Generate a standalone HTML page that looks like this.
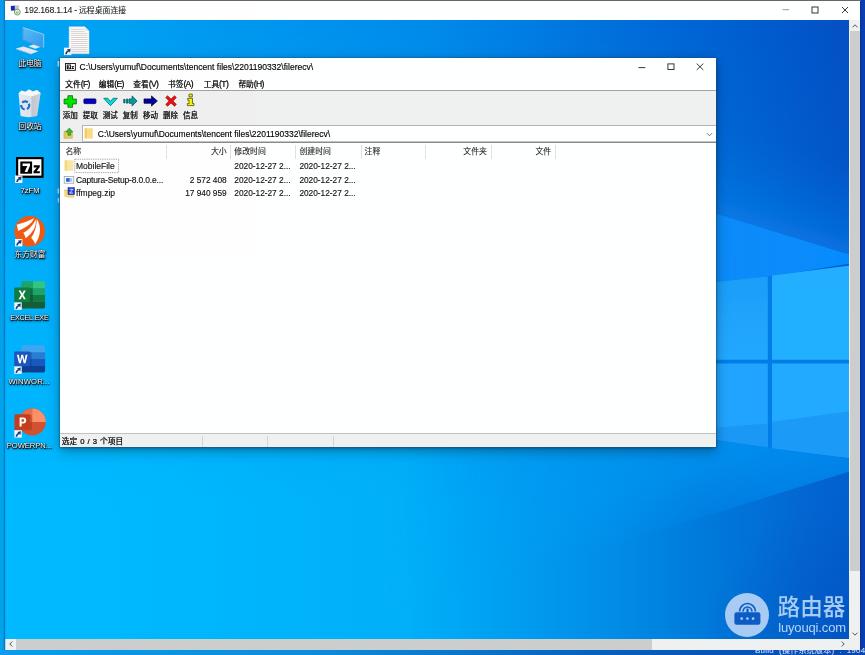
<!DOCTYPE html>
<html lang="zh-CN">
<head>
<meta charset="utf-8">
<title>192.168.1.14 - 远程桌面连接</title>
<style>
*{box-sizing:border-box;margin:0;padding:0}
html,body{width:865px;height:655px;overflow:hidden}
body{position:relative;will-change:opacity;opacity:.999;background:#0b93e3;font-family:"Liberation Sans","Noto Sans CJK SC",sans-serif;font-size:8.6px;color:#000}
.abs,.abs>*{position:absolute}
.tx{white-space:nowrap;line-height:12px;height:12px}
#win{-webkit-text-stroke:.14px currentColor}
#win .mi,#toolbar .lb,#status .tx{-webkit-text-stroke:.22px currentColor}
#list .h{-webkit-text-stroke:.1px currentColor}
svg{display:block;overflow:visible}
/* host desktop strips */
#host-left{left:0;top:0;width:5px;height:655px;background:linear-gradient(90deg,rgba(4,124,200,0) 0,rgba(4,124,200,0) 58%,rgba(4,124,200,.55) 78%,rgba(4,124,200,1) 90%,rgba(4,124,200,1) 100%),linear-gradient(180deg,#0a9cee 0,#049ee8 25%,#00a6ea 78%,#02a2e8 100%)}
#host-left2{left:5px;top:20px;width:1.2px;height:630px;background:linear-gradient(90deg,rgba(6,128,204,.5),rgba(6,128,204,0))}
#host-right{left:860px;top:0;width:5px;height:655px;background:linear-gradient(90deg,#0a2f8c 0,#0a3cab 30%,#0a40b2 100%)}
#host-bottom{left:0;top:650px;width:865px;height:5px;background:linear-gradient(90deg,#0c9cee 0%,#0a8ee0 35%,#0878d0 52%,#0560c0 70%,#0a46b6 100%)}
#host-bottom .tx{left:755px;top:-5.5px;font-size:8px;color:#dfe9f8;letter-spacing:.25px}
/* rdp window */
#rdp-top{left:4px;top:0;width:857px;height:1px;background:#62676e}
#rdp-title{left:5px;top:1px;width:855px;height:19px;background:#fff}
#rdp-title .tx{left:19.3px;top:3px;font-size:8.8px;color:#1c1c1c;-webkit-text-stroke:.08px currentColor}
#desk{left:5px;top:20px;width:844px;height:619px;overflow:hidden;background:#0a8ee6}
#wall{left:0;top:0}
#vscroll{left:849px;top:20px;width:11px;height:619px;background:#f0f0f0}
#vscroll .thumb{left:1px;top:11px;width:10px;height:539.5px;background:#cdcdcd}
#hscroll{left:5px;top:638.6px;width:844px;height:11.2px;background:#f0f0f0}
#hscroll .thumb{left:11px;top:0;width:636px;height:11.2px;background:#cdcdcd}
#corner{left:849px;top:638.6px;width:11px;height:11.2px;background:#f0f0f0}
.lab{width:70px;text-align:center;color:#fff;font-size:7.7px;line-height:10px;height:10px;white-space:nowrap;text-shadow:0 0 1px #000,.5px .8px 1px #000,.5px 1px 1.5px rgba(0,0,0,.9),0 1px 2.5px rgba(0,0,0,.7)}
/* 7-zip window */
#win{left:55.3px;top:37.9px;width:655.3px;height:389.5px;background:#fff;box-shadow:0 0 0 .6px rgba(40,80,130,.6),0 1px 3px rgba(0,0,0,.35),0 4px 12px rgba(0,0,0,.32)}
#win .title{left:19.3px;top:2.7px;font-size:8.55px}
#win .mi{top:20.5px;font-size:7.7px}
#win .mi i{font-style:normal;font-size:8.6px;letter-spacing:-.62px}
#toolbar{left:0;top:32.2px;width:655.3px;height:35.4px;background:#f0f0f0;border-top:.9px solid #a3a3a3}
#toolbar .lb{top:20.4px;font-size:7.5px;line-height:10px;height:10px;white-space:nowrap;color:#000}
#addr{left:0;top:67.4px;width:655.3px;height:17px;background:#f0f0f0}
#addr .combo{left:21.7px;top:-.5px;width:633.6px;height:17px;background:#fff;border:.8px solid #b4b4b4;border-right:none;border-bottom-color:#c4c4c4}
#addr .tx{left:37.5px;top:2.4px;font-size:8.5px}
#list{left:0;top:84.1px;width:655.3px;height:291.2px;background:#fff;border-top:.9px solid #868b94}
#list .h{top:4px;font-size:7.9px;line-height:10px;height:10px;white-space:nowrap;color:#262626}
#list .sep{top:2px;width:.9px;height:14.5px;background:#e0e0e0}
#list .c{font-size:8.5px;line-height:11px;height:11px;white-space:nowrap;color:#111}
#list .n{font-size:8.3px;line-height:11px;height:11px;white-space:nowrap;color:#111}
#status{left:0;top:375.3px;width:655.3px;height:14.2px;background:#f0f0f0;border-top:.9px solid #c2c2c2}
#status .tx{left:1.4px;top:1.7px;font-size:7.7px;line-height:11px;height:11px;word-spacing:.95px}
#status .sep{top:1.5px;width:.9px;height:11.5px;background:#d4d4d4}
</style>
</head>
<body class="abs">
<div id="host-left"></div>
<div id="host-left2" style="z-index:5"></div>
<div id="host-right"></div>
<div id="host-bottom" class="abs"><div class="tx">Build&nbsp; (操作系统版本)&nbsp; :&nbsp; 1904</div></div>
<div id="rdp-top"></div>
<div id="rdp-title" class="abs">
  <svg style="left:5.3px;top:3.6px" width="11" height="11" viewBox="0 0 11 11">
    <rect x="2.7" y=".3" width="6.2" height="4.7" fill="#c4c8ce"/>
    <rect x=".9" y=".9" width="3.9" height="4.7" fill="#1428b4"/>
    <circle cx="7.3" cy="7.1" r="2.9" fill="#f2f5ee" stroke="#5c9a4a" stroke-width=".9"/>
    <path d="M6 7.9 L7.4 6 M6.3 8.3 L8.7 7.6" stroke="#4a8a3a" stroke-width=".7" fill="none"/>
  </svg>
  <div class="tx"><span style="letter-spacing:-.3px">192.168.1.14 - </span><span style="font-size:7.87px">远程桌面连接</span></div>
  <svg style="left:777px;top:8.3px" width="8" height="2" viewBox="0 0 8 2"><rect x=".5" y=".3" width="6.6" height=".9" fill="#8a8a8a"/></svg>
  <svg style="left:806px;top:4.5px" width="8" height="8" viewBox="0 0 8 8"><rect x="1" y="1" width="6" height="6" fill="none" stroke="#222" stroke-width=".9"/></svg>
  <svg style="left:836px;top:4.5px" width="8" height="8" viewBox="0 0 8 8"><path d="M1 1 L7 7 M7 1 L1 7" stroke="#222" stroke-width=".9" fill="none"/></svg>
</div>
<div id="desk" class="abs">
  <svg id="wall" viewBox="5 20 844 619" width="844" height="619" preserveAspectRatio="none">
      <defs>
        <linearGradient id="gt" gradientUnits="userSpaceOnUse" x1="5" y1="0" x2="849" y2="0">
          <stop offset="0" stop-color="#00a4f4"/><stop offset="0.124" stop-color="#00a2f4"/><stop offset="0.51" stop-color="#008aea"/><stop offset="0.77" stop-color="#006ad8"/><stop offset="0.918" stop-color="#025acc"/><stop offset="1" stop-color="#0550c4"/>
        </linearGradient>
        <linearGradient id="gb" gradientUnits="userSpaceOnUse" x1="5" y1="0" x2="849" y2="0">
          <stop offset="0" stop-color="#00b9ff"/><stop offset="0.112" stop-color="#00b9ff"/><stop offset="0.474" stop-color="#00b0f9"/><stop offset="0.71" stop-color="#028ee8"/><stop offset="0.817" stop-color="#007cdc"/><stop offset="0.948" stop-color="#0467d2"/><stop offset="1" stop-color="#0261cf"/>
        </linearGradient>
        <linearGradient id="gm" gradientUnits="userSpaceOnUse" x1="0" y1="30" x2="0" y2="625">
          <stop offset="0" stop-color="#000"/><stop offset="0.513" stop-color="#ababab"/><stop offset="0.8" stop-color="#fff"/><stop offset="1" stop-color="#fff"/>
        </linearGradient>
        <mask id="mk" maskUnits="userSpaceOnUse" x="5" y="20" width="844" height="619"><rect x="5" y="20" width="844" height="619" fill="url(#gm)"/></mask>
        <linearGradient id="bu" gradientUnits="userSpaceOnUse" x1="560" y1="0" x2="860" y2="0">
          <stop offset="0" stop-color="#0a90ff" stop-opacity="0"/><stop offset="0.5" stop-color="#0a90ff" stop-opacity="0.85"/><stop offset="1" stop-color="#068cff" stop-opacity="1"/>
        </linearGradient>
        <linearGradient id="bl" gradientUnits="userSpaceOnUse" x1="380" y1="0" x2="860" y2="0">
          <stop offset="0" stop-color="#0098f8" stop-opacity="0"/><stop offset="0.458" stop-color="#0098f8" stop-opacity="0.05"/><stop offset="0.667" stop-color="#0098f8" stop-opacity="0.14"/><stop offset="0.844" stop-color="#0098f8" stop-opacity="0.5"/><stop offset="1" stop-color="#0098f8" stop-opacity="0.62"/>
        </linearGradient>
        <linearGradient id="bg2" gradientUnits="userSpaceOnUse" x1="700" y1="518" x2="673.4" y2="432">
          <stop offset="0" stop-color="#00a0f8" stop-opacity="0"/><stop offset="0.55" stop-color="#00a0f8" stop-opacity="0.45"/><stop offset="1" stop-color="#00a0f8" stop-opacity="0.6"/>
        </linearGradient>
        <linearGradient id="bm2" gradientUnits="userSpaceOnUse" x1="380" y1="0" x2="860" y2="0">
          <stop offset="0" stop-color="#000"/><stop offset="0.375" stop-color="#999"/><stop offset="0.667" stop-color="#fff"/><stop offset="1" stop-color="#fff"/>
        </linearGradient>
        <mask id="mk2" maskUnits="userSpaceOnUse" x="5" y="20" width="844" height="619"><rect x="5" y="20" width="844" height="619" fill="url(#bm2)"/></mask>
        <linearGradient id="gl" gradientUnits="userSpaceOnUse" x1="783" y1="234" x2="809.4" y2="148">
          <stop offset="0" stop-color="#1088f4" stop-opacity="0.5"/><stop offset="0.5" stop-color="#0c7cea" stop-opacity="0.25"/><stop offset="1" stop-color="#0870e0" stop-opacity="0"/>
        </linearGradient>
        <linearGradient id="p1" gradientUnits="userSpaceOnUse" x1="0" y1="276" x2="0" y2="360">
          <stop offset="0" stop-color="#1e9ef8"/><stop offset="1" stop-color="#22a8ff"/>
        </linearGradient>
        <linearGradient id="p2" gradientUnits="userSpaceOnUse" x1="0" y1="264" x2="0" y2="360">
          <stop offset="0" stop-color="#25aeff"/><stop offset="1" stop-color="#22b0ff"/>
        </linearGradient>
        <radialGradient id="dk" gradientUnits="userSpaceOnUse" cx="872" cy="662" r="175">
          <stop offset="0" stop-color="#043aa8" stop-opacity="0.4"/><stop offset="1" stop-color="#043aa8" stop-opacity="0"/>
        </radialGradient>
        <filter id="soft" x="-5%" y="-5%" width="110%" height="110%"><feGaussianBlur stdDeviation="0.7"/></filter>
      </defs>
      <rect x="5" y="20" width="844" height="619" fill="url(#gt)"/>
      <rect x="5" y="20" width="844" height="619" fill="url(#gb)" mask="url(#mk)"/>
      <rect x="680" y="470" width="169" height="169" fill="url(#dk)"/>
      <g filter="url(#soft)">
        <polygon points="882,264.4 860,257.7 560,165.6 560,60 882,60" fill="url(#gl)"/>
        <polygon points="882,264.4 860,257.7 560,165.6 560,310 700,288 860,262" fill="url(#bu)"/>
        <polygon points="882,461 860,460.7 700,430 380,356 380,617 860,468.3" fill="url(#bg2)" mask="url(#mk2)"/>
        <polygon points="882,461 860,460.7 700,430 380,356 380,617 860,468.3" fill="url(#bl)"/>
        <polygon points="690,284.8 767.8,276.5 772,275.6 860,264.3 860,459.3 772,447.9 767.8,447 690,435.8" fill="#047de7"/>
        <polygon points="690,284.8 767.8,276.5 767.8,359.8 690,359.8" fill="url(#p1)"/>
        <polygon points="772,275.6 860,264.3 860,359.8 772,359.8" fill="url(#p2)"/>
        <polygon points="690,363.5 767.8,363.5 767.8,447 690,435.8" fill="#22a4ff"/>
        <polygon points="772,363.5 860,363.5 860,459.3 772,447.9" fill="#22aaff"/>
        <polygon points="690,429.8 767.8,423.5 767.8,447 690,435.8" fill="#1c98f6"/>
        <polygon points="772,421.8 860,410 860,459.3 772,447.9" fill="#1c9af8"/>
      </g>
    </svg>
  <!-- desktop icons: coordinates inside #desk are page coords minus (5,20) -->
  <svg id="icons" style="left:0;top:0" width="844" height="619" viewBox="5 20 844 619">
    <defs>
      
      <linearGradient id="mon" x1="0" y1="0" x2="1" y2="1"><stop offset="0" stop-color="#5cbcf8"/><stop offset="1" stop-color="#2f9aec"/></linearGradient>
      <linearGradient id="bin" x1="0" y1="0" x2="1" y2="0"><stop offset="0" stop-color="#e9edf3"/><stop offset=".56" stop-color="#dde1e8"/><stop offset=".6" stop-color="#c2c7d0"/><stop offset="1" stop-color="#cfd3da"/></linearGradient>
    </defs>
    <!-- This PC -->
    <g>
      <polygon points="23.1,27.5 43.7,34.3 43.7,47.4 23.1,39.8" fill="url(#mon)" stroke="#b4dcf8" stroke-width=".7"/>
      <path d="M23.1 27.8 V39.8 L43.5 47.3" fill="none" stroke="#2478c4" stroke-width=".8" opacity=".8"/>
      <polygon points="28.3,46.2 33.5,44.6 40.4,46.9 35.2,48.8" fill="#dbe9f5"/>
      <polygon points="16,48.6 23.5,46.4 38.4,51.3 31.2,53.9" fill="#ebe6ee"/>
      <polygon points="16,48.6 31.2,53.9 31.2,54.6 16,49.3" fill="#c4ccd8"/>
    </g>
    <!-- text file shortcut -->
    <g>
      <path d="M69.1 26.7 H84.8 L89 30.9 V53.7 H69.1 Z" fill="#fdfdfd" stroke="#d4dbe2" stroke-width=".5"/>
      <path d="M84.8 26.7 V30.9 H89 Z" fill="#e3e6ea"/>
      <g stroke="#cfc4c0" stroke-width=".75">
        <path d="M71 29.3H84 M71 31.4H84.5 M71 33.4H87.6 M71 35.4H87.6 M71 37.5H87.6 M71 39.5H87.6 M71 41.5H87.6 M71 43.5H87.6 M71 45.6H87.6 M71 47.6H87.6 M71 49.6H87.6 M71 51.6H87.6"/>
      </g>
      <g transform="translate(64 47.7)"><rect x="0" y="0" width="7.4" height="7.4" fill="#f4f6f8"/>
        <path d="M1.2 6.6 C1.4 4.6 2.5 3.3 3.8 2.8 L2.9 1.8 L6.6 1.1 L6 4.9 L5 3.9 C3.8 4.4 3 5.3 2.8 6.6 Z" fill="#1b3f80"/></g>
    </g>
    <!-- recycle bin -->
    <g>
      <path d="M18.6 94 L21.5 90.8 L25.5 92 L29 89.6 L33 91.6 L37 90.3 L40.6 93.6 L37.2 116 Q29 118.3 20.6 116 Z" fill="url(#bin)"/>
      <path d="M18.2 93.6 L21.5 90.6 L25.5 91.8 L29 89.4 L33 91.4 L37 90.1 L41 93.2 L31.2 96.4 Z" fill="#f6f8fa"/>
      <circle cx="25.2" cy="105.4" r="4" fill="none" stroke="#1a6fca" stroke-width="2.2" stroke-dasharray="6 2.38" transform="rotate(-25 25.2 105.4)"/>
    </g>
    <!-- 7zFM -->
    <g>
      <rect x="16" y="157" width="27.6" height="20.9" fill="#000"/>
      <rect x="18.2" y="159.2" width="23.2" height="16.4" fill="#fff"/>
      <rect x="20.3" y="161.5" width="11.8" height="12.2" fill="#000"/>
      <path d="M22.6 163.6 H30 V165.6 L27.4 171.9 H24.6 L27.3 165.9 H22.6 Z" fill="#fff"/>
      <path d="M33.7 165.3 H39.8 V167 L36.5 171.2 H39.8 V173.3 H33.5 V171.6 L36.8 167.4 H33.7 Z" fill="#000"/>
      <g transform="translate(15 175.5)"><rect x="0" y="0" width="7.4" height="7.4" fill="#f4f6f8"/>
        <path d="M1.2 6.6 C1.4 4.6 2.5 3.3 3.8 2.8 L2.9 1.8 L6.6 1.1 L6 4.9 L5 3.9 C3.8 4.4 3 5.3 2.8 6.6 Z" fill="#1b3f80"/></g>
    </g>
    <!-- eastmoney -->
    <g>
      <circle cx="29.7" cy="231.2" r="15.3" fill="#f05a12"/>
      <path d="M16.7 224.7 Q25.5 222.6 34.2 218.3 Q31.5 225.4 18 231 Q17.8 227.6 16.7 224.7Z" fill="#fff"/>
      <path d="M23.3 232.7 Q31 229 35.7 219.4 Q37.6 228.6 25.7 238.3 Q25 235.2 23.3 232.7Z" fill="#fff"/>
      <path d="M31.2 237.7 Q36.6 230.4 36.8 219 Q44 231 35.1 244 Q33.8 240.4 31.2 237.7Z" fill="#fff"/>
      <g transform="translate(15 239)"><rect x="0" y="0" width="7.4" height="7.4" fill="#f4f6f8"/>
        <path d="M1.2 6.6 C1.4 4.6 2.5 3.3 3.8 2.8 L2.9 1.8 L6.6 1.1 L6 4.9 L5 3.9 C3.8 4.4 3 5.3 2.8 6.6 Z" fill="#1b3f80"/></g>
    </g>
    <!-- Excel -->
    <g>
      <path d="M23 281.3 H33 V288.2 H21.4 V282.9 Q21.4 281.3 23 281.3Z" fill="#21a366"/>
      <path d="M33 281.3 H43.5 Q45.1 281.3 45.1 282.9 V288.2 H33Z" fill="#33c481"/>
      <rect x="21.4" y="288.2" width="11.6" height="6.8" fill="#107c41"/>
      <rect x="33" y="288.2" width="12.1" height="6.8" fill="#21a366"/>
      <rect x="21.4" y="295" width="11.6" height="6.9" fill="#185c37"/>
      <rect x="33" y="295" width="12.1" height="6.9" fill="#107c41"/>
      <path d="M21.4 301.9 H45.1 V306.8 Q45.1 308.4 43.5 308.4 H23 Q21.4 308.4 21.4 306.8Z" fill="#185c37"/>
      <rect x="14.2" y="287.5" width="16" height="14.8" rx="1.2" fill="#107c41"/>
      <rect x="30.2" y="288.2" width="1.6" height="14" fill="#0b5a2e" opacity=".35"/>
      <path d="M18.6 290.6 H20.7 L22.2 293.5 L23.8 290.6 H25.8 L23.3 294.9 L25.9 299.3 H23.8 L22.2 296.3 L20.6 299.3 H18.5 L21.1 294.9 Z" fill="#fff"/>
      <g transform="translate(14.3 302.4)"><rect x="0" y="0" width="7.4" height="7.4" fill="#f4f6f8"/>
        <path d="M1.2 6.6 C1.4 4.6 2.5 3.3 3.8 2.8 L2.9 1.8 L6.6 1.1 L6 4.9 L5 3.9 C3.8 4.4 3 5.3 2.8 6.6 Z" fill="#1b3f80"/></g>
    </g>
    <!-- Word -->
    <g>
      <path d="M23 345.3 H43.5 Q45.1 345.3 45.1 346.9 V352.5 H21.4 V346.9 Q21.4 345.3 23 345.3Z" fill="#41a5ee"/>
      <rect x="21.4" y="352.3" width="23.7" height="6.9" fill="#2b7cd3"/>
      <rect x="21.4" y="359" width="23.7" height="7" fill="#185abd"/>
      <path d="M21.4 365.9 H45.1 V370.8 Q45.1 372.4 43.5 372.4 H23 Q21.4 372.4 21.4 370.8Z" fill="#103f91"/>
      <rect x="14.2" y="351.5" width="16" height="14.8" rx="1.2" fill="#1e55be"/>
      <rect x="30.2" y="352.3" width="1.6" height="14" fill="#0b2f6e" opacity=".3"/>
      <path d="M16.9 354.7 H18.8 L20 360.6 L21.4 354.7 H23.1 L24.5 360.6 L25.7 354.7 H27.5 L25.5 363.2 H23.7 L22.2 357.3 L20.8 363.2 H19 Z" fill="#fff"/>
      <g transform="translate(14.3 366.4)"><rect x="0" y="0" width="7.4" height="7.4" fill="#f4f6f8"/>
        <path d="M1.2 6.6 C1.4 4.6 2.5 3.3 3.8 2.8 L2.9 1.8 L6.6 1.1 L6 4.9 L5 3.9 C3.8 4.4 3 5.3 2.8 6.6 Z" fill="#1b3f80"/></g>
    </g>
    <!-- PowerPoint -->
    <g>
      <circle cx="32.3" cy="422" r="13.5" fill="#d35230"/>
      <path d="M32.3 408.5 A13.5 13.5 0 0 0 18.8 422 H32.3Z" fill="#ed6c47"/>
      <path d="M32.3 408.5 A13.5 13.5 0 0 1 45.8 422 H32.3Z" fill="#ff8f6b"/>
      <rect x="14.4" y="414.3" width="15.9" height="15.9" rx="1.2" fill="#c43e1c"/>
      <rect x="30.3" y="415" width="1.6" height="15" fill="#7a2410" opacity=".3"/>
      <path d="M19.6 417.6 H23.3 Q26.2 417.6 26.2 420.5 Q26.2 423.4 23.1 423.4 H21.6 V426.6 H19.6 Z M21.6 419.2 V421.8 H22.9 Q24.2 421.8 24.2 420.5 Q24.2 419.2 22.9 419.2 Z" fill="#fff" fill-rule="evenodd"/>
      <g transform="translate(14.4 430.2)"><rect x="0" y="0" width="7.4" height="7.4" fill="#f4f6f8"/>
        <path d="M1.2 6.6 C1.4 4.6 2.5 3.3 3.8 2.8 L2.9 1.8 L6.6 1.1 L6 4.9 L5 3.9 C3.8 4.4 3 5.3 2.8 6.6 Z" fill="#1b3f80"/></g>
    </g>
    <!-- partially hidden label bits next to window edge -->
    <g fill="#fff" opacity=".75"><rect x="57.6" y="61" width="1.6" height="5.5"/><rect x="57.6" y="188.5" width="1.6" height="5"/><rect x="57.8" y="198" width="1.4" height="4.5"/></g>
    <!-- watermark -->
    <g>
      <circle cx="747" cy="615" r="22" fill="#a9cbf3"/>
      <rect x="734.4" y="612.2" width="26" height="12.6" rx="2.2" fill="#0d5cc4"/>
      <circle cx="741.7" cy="618.6" r="1.3" fill="#a9cbf3"/><circle cx="747.4" cy="618.6" r="1.3" fill="#a9cbf3"/><circle cx="753.1" cy="618.6" r="1.3" fill="#a9cbf3"/>
      <path d="M739.6 611.4 A7.9 7.9 0 0 1 755.4 611.4" fill="none" stroke="#0d5cc4" stroke-width="1.7"/>
      <path d="M743.1 611.4 A4.4 4.4 0 0 1 751.9 611.4" fill="none" stroke="#0d5cc4" stroke-width="1.7"/>
      <rect x="746.4" y="608.6" width="2.2" height="4.5" fill="#0d5cc4"/>
    </g>
  </svg>
  <div class="tx" style="left:772.6px;top:573.2px;font-size:22.6px;font-weight:500;line-height:30px;height:30px;color:#a9cbf3;font-family:'Liberation Sans','Noto Sans CJK SC',sans-serif">路由器</div>
  <div class="tx" style="left:773.2px;top:598.6px;font-size:13px;line-height:18px;height:18px;color:#b9d4f4;letter-spacing:-.15px">luyouqi.com</div>
  <div class="lab" style="left:-10px;top:39px">此电脑</div>
  <div class="lab" style="left:-10px;top:102.3px">回收站</div>
  <div class="lab" style="left:-10px;top:166.2px">7zFM</div>
  <div class="lab" style="left:-10px;top:229.5px">东方财富</div>
  <div class="lab" style="left:-10.6px;top:293.2px;font-size:7.2px;letter-spacing:-.2px">EXCEL.EXE</div>
  <div class="lab" style="left:-11px;top:357px;letter-spacing:.1px">WINWOR...</div>
  <div class="lab" style="left:-10.7px;top:420.8px;letter-spacing:-.1px">POWERPN...</div>
  <div id="win" class="abs">
    <svg style="left:4.8px;top:5.2px" width="10.8" height="7.8" viewBox="0 0 10.8 7.8">
      <rect x="0" y="0" width="10.8" height="7.8" fill="#111"/>
      <rect x=".9" y=".9" width="9" height="6" fill="#fff"/>
      <rect x="1.7" y="1.6" width="4.3" height="4.6" fill="#111"/>
      <path d="M2.5 2.5 H5.2 V3.2 L4.2 5.5 H3.2 L4.2 3.3 H2.5Z" fill="#fff"/>
      <path d="M6.6 3 H8.9 V3.7 L7.6 5.1 H8.9 V5.9 H6.5 V5.2 L7.8 3.8 H6.6Z" fill="#111"/>
    </svg>
    <div class="tx title">C:\Users\yumuf\Documents\tencent files\2201190332\filerecv\</div>
    <svg style="left:577.6px;top:8.8px" width="8" height="2" viewBox="0 0 8 2"><rect x=".4" y=".2" width="6.9" height=".9" fill="#222"/></svg>
    <svg style="left:606.3px;top:5.4px" width="8" height="8" viewBox="0 0 8 8"><rect x=".9" y=".9" width="6.1" height="5.6" fill="none" stroke="#222" stroke-width=".9"/></svg>
    <svg style="left:636.2px;top:5.4px" width="8" height="8" viewBox="0 0 8 8"><path d="M.7 .6 L7.3 6.9 M7.3 .6 L.7 6.9" stroke="#222" stroke-width=".9" fill="none"/></svg>
    <div class="tx mi" style="left:5px">文件<i>(F)</i></div>
    <div class="tx mi" style="left:38.5px">编辑<i>(E)</i></div>
    <div class="tx mi" style="left:73px">查看<i>(V)</i></div>
    <div class="tx mi" style="left:107.7px">书签<i>(A)</i></div>
    <div class="tx mi" style="left:143.4px">工具<i>(T)</i></div>
    <div class="tx mi" style="left:178.1px">帮助<i>(H)</i></div>
    <div id="toolbar" class="abs">
      <svg style="left:0;top:0" width="200" height="34" viewBox="60.3 90.9 200 34">
        <path d="M68.2 95.6 H72.9 V99 H76.7 V103.8 H72.9 V107.2 H68.2 V103.8 H64.4 V99 H68.2Z" fill="#00e600" stroke="#046a04" stroke-width=".8" stroke-linejoin="round"/>
        <rect x="84.2" y="98.8" width="12" height="4.7" rx=".8" fill="#0000cc" stroke="#00005a" stroke-width=".8"/>
        <path d="M104 98.2 H108.2 L110.8 101.3 L113.4 98.2 H117.6 L110.8 105.6Z" fill="#00dede" stroke="#056a6a" stroke-width=".8" stroke-linejoin="round"/>
        <g fill="#009c9c" stroke="#034c4c" stroke-width=".7" stroke-linejoin="round">
          <rect x="124" y="99.2" width="1.3" height="3.6"/><rect x="126.6" y="99" width="1.7" height="4"/>
          <path d="M129.4 98.8 H132.4 V95.8 L137.4 100.9 L132.4 106 V103.2 H129.4Z"/>
        </g>
        <path d="M144.3 98.8 H151.8 V95.8 L157.7 100.9 L151.8 106 V103.2 H144.3Z" fill="#00009a" stroke="#000040" stroke-width=".7" stroke-linejoin="round"/>
        <path d="M166 97.4 L167.9 95.7 L171.3 99 L174.8 95.7 L176.7 97.5 L173.3 100.9 L176.7 104.3 L174.8 106.1 L171.3 102.8 L167.9 106.1 L166 104.3 L169.4 100.9Z" fill="#ec1212" stroke="#8a0000" stroke-width=".6" stroke-linejoin="round"/>
        <g fill="#f2f200" stroke="#3c3c00" stroke-width=".7" stroke-linejoin="round">
          <rect x="189.3" y="94" width="3.3" height="2.8"/>
          <path d="M188 98.2 H192.8 V103.4 H194.3 V105.5 H187.7 V103.4 H189.4 V100.2 H188Z"/>
        </g>
      </svg>
      <div class="lb" style="left:2.5px">添加</div>
      <div class="lb" style="left:22.5px">提取</div>
      <div class="lb" style="left:42.5px">测试</div>
      <div class="lb" style="left:62.5px">复制</div>
      <div class="lb" style="left:82.6px">移动</div>
      <div class="lb" style="left:102.8px">删除</div>
      <div class="lb" style="left:122.8px">信息</div>
    </div>
    <div id="addr" class="abs">
      <div class="combo"></div>
      <svg style="left:0;top:0" width="655.3" height="17" viewBox="60.3 125.3 655.3 17">
        <path d="M64.3 131.6 H67 L68 132.6 H72.6 V138.6 H64.3Z" fill="#e6cc5a" stroke="#a89030" stroke-width=".4"/>
        <path d="M69.6 128.4 L73.2 132.2 H71 V135.6 H68.2 V132.2 H66Z" fill="#3cb83c" stroke="#1c7a1c" stroke-width=".5" stroke-linejoin="round"/>
        <rect x="85" y="128.5" width="8.1" height="10.2" rx=".6" fill="#f9dc86"/>
        <rect x="85" y="128.5" width="2.2" height="10.2" fill="#f3cd64"/>
        <path d="M707.2 133.5 L709.8 136.1 L712.4 133.5" fill="none" stroke="#555" stroke-width=".8"/>
      </svg>
      <div class="tx">C:\Users\yumuf\Documents\tencent files\2201190332\filerecv\</div>
    </div>
    <div id="list" class="abs">
      <div class="h" style="left:5.1px">名称</div>
      <div class="h" style="left:126.4px;width:40px;text-align:right">大小</div>
      <div class="h" style="left:174px">修改时间</div>
      <div class="h" style="left:239.1px">创建时间</div>
      <div class="h" style="left:304.3px">注释</div>
      <div class="h" style="left:386.7px;width:40px;text-align:right">文件夹</div>
      <div class="h" style="left:450.9px;width:40px;text-align:right">文件</div>
      <div class="sep" style="left:105.3px"></div>
      <div class="sep" style="left:169.7px"></div>
      <div class="sep" style="left:234.6px"></div>
      <div class="sep" style="left:300.7px"></div>
      <div class="sep" style="left:364.4px"></div>
      <div class="sep" style="left:430.3px"></div>
      <div class="sep" style="left:494.9px"></div>
      <svg style="left:0;top:0" width="120" height="60" viewBox="60.3 142.9 120 60">
        <rect x="65" y="160.2" width="8.7" height="10.5" rx=".6" fill="#fae7a6"/>
        <rect x="65" y="160.2" width="2.4" height="10.5" fill="#f6d87c"/>
        <rect x="75.1" y="159.1" width="43.8" height="13.4" fill="none" stroke="#6e6e6e" stroke-width=".7" stroke-dasharray=".9 .9"/>
        <rect x="64.5" y="176.5" width="9.6" height="6.6" fill="#fff" stroke="#8c96a4" stroke-width=".7"/>
        <rect x="66.4" y="178" width="3.6" height="3.7" fill="#1a6ad8"/>
        <rect x="70.4" y="178" width="2.2" height="3.7" fill="#a9c6ee"/>
        <path d="M64.4 190.2 H68 V196.8 H74 V190.5" fill="none" stroke="#8a7a20" stroke-width=".6"/>
        <rect x="64.6" y="190.4" width="9.4" height="6.4" fill="#f0dc70"/>
        <rect x="68.3" y="187.6" width="6.5" height="7" fill="#2438d8" stroke="#10208a" stroke-width=".5"/>
        <path d="M69.9 189.2 H73.2 L70 193 H73.3" fill="none" stroke="#fff" stroke-width=".8"/>
      </svg>
      <div class="c" style="left:15.7px;top:17.6px" id="t1">MobileFile</div>
      <div class="c" style="left:15.7px;top:31.9px;letter-spacing:-.17px" id="t2">Captura-Setup-8.0.0.e...</div>
      <div class="c" style="left:15.7px;top:45px" id="t3">ffmpeg.zip</div>
      <div class="n" style="left:106.4px;width:60px;text-align:right;top:31.9px">2 572 408</div>
      <div class="n" style="left:106.4px;width:60px;text-align:right;top:45px">17 940 959</div>
      <div class="n" style="left:174px;top:17.6px">2020-12-27 2...</div>
      <div class="n" style="left:174px;top:31.9px">2020-12-27 2...</div>
      <div class="n" style="left:174px;top:45px">2020-12-27 2...</div>
      <div class="n" style="left:239.1px;top:17.6px">2020-12-27 2...</div>
      <div class="n" style="left:239.1px;top:31.9px">2020-12-27 2...</div>
      <div class="n" style="left:239.1px;top:45px">2020-12-27 2...</div>
    </div>
    <div id="status" class="abs">
      <div class="tx">选定 0 / 3 个项目</div>
      <div class="sep" style="left:142px"></div>
      <div class="sep" style="left:207.2px"></div>
      <div class="sep" style="left:272.3px"></div>
    </div>
  </div>
</div>
<div id="vscroll" class="abs">
  <svg style="left:2.5px;top:3.5px" width="6" height="4" viewBox="0 0 6 4"><path d="M.5 3.3 L3 .8 L5.5 3.3" fill="none" stroke="#555" stroke-width="1"/></svg>
  <div class="thumb"></div>
  <svg style="left:2.5px;top:611.5px" width="6" height="4" viewBox="0 0 6 4"><path d="M.5 .7 L3 3.2 L5.5 .7" fill="none" stroke="#555" stroke-width="1"/></svg>
</div>
<div id="hscroll" class="abs">
  <svg style="left:3.5px;top:2.6px" width="4" height="6" viewBox="0 0 4 6"><path d="M3.3 .5 L.8 3 L3.3 5.5" fill="none" stroke="#555" stroke-width="1"/></svg>
  <div class="thumb"></div>
  <svg style="left:836px;top:2.6px" width="4" height="6" viewBox="0 0 4 6"><path d="M.7 .5 L3.2 3 L.7 5.5" fill="none" stroke="#555" stroke-width="1"/></svg>
</div>
<div id="corner"></div>
</body>
</html>
